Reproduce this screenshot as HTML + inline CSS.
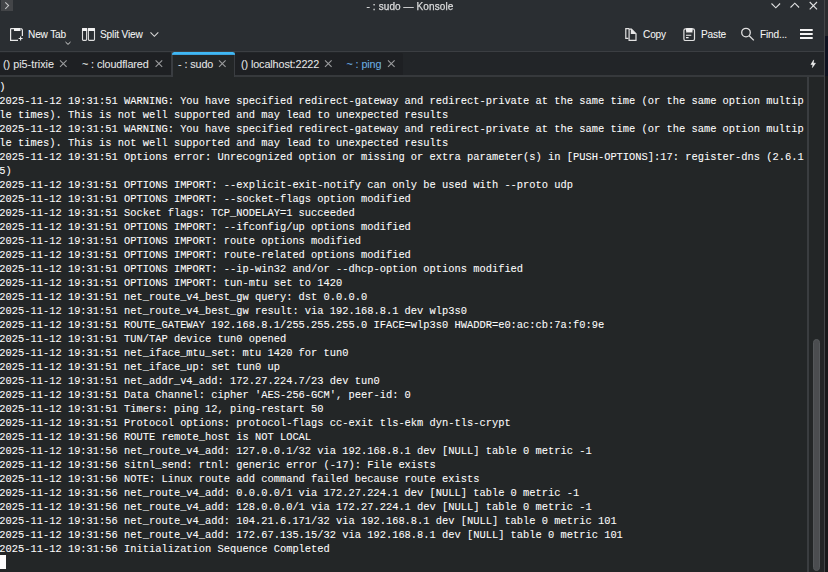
<!DOCTYPE html>
<html><head><meta charset="utf-8">
<style>
*{margin:0;padding:0;box-sizing:border-box}
html,body{width:828px;height:572px;overflow:hidden;background:#1b1d20}
body{position:relative;font-family:"Liberation Sans",sans-serif}
.abs{position:absolute}
#header{left:0;top:0;width:825px;height:51px;background:#2a2e32}
#title{left:-4px;top:-0.5px;width:828px;text-align:center;color:#d9dadb;font-size:10px;line-height:14px;white-space:pre;letter-spacing:0.1px;-webkit-text-stroke:0.25px #dcdddd;will-change:transform}
.tb{color:#f4f5f5;font-size:10.1px;line-height:12px;white-space:pre;letter-spacing:-0.15px;-webkit-text-stroke:0.05px #fcfcfc}
#sep{left:0;top:51px;width:825px;height:1px;background:#3b3e42}
#tabbar{left:0;top:52px;width:825px;height:25px;background:#222528}
#tabs{left:0;top:53px;width:403px;height:22px;background:#1e2023;border-top-right-radius:2px}
#tabline{left:0;top:75px;width:825px;height:2px;background:#36393c}
.tab{color:#e6e7e8;font-size:10.8px;line-height:14px;white-space:pre;letter-spacing:-0.1px;-webkit-text-stroke:0.05px currentColor}
.x{color:#9a9c9e}
#active{left:171px;top:52px;width:64px;height:25px;background:#232627;border-left:2px solid #3a3d41;border-right:1.5px solid #3a3d41}
#blue{left:172px;top:52px;width:63px;height:3px;background:linear-gradient(#3fb8f4,#3fb8f4 66%,#3a8fc4);border-radius:2.5px 2.5px 0 0}
#term{left:0;top:77px;width:825px;height:495px;background:#232627}
#lines{left:-0.7px;top:79.5px;font-family:"Liberation Mono",monospace;font-size:10.4px;line-height:14px;color:#fcfcfc;white-space:pre;-webkit-text-stroke:0.08px #fcfcfc}
#cursor{left:0;top:555px;width:6px;height:14px;background:#fcfcfc}
#vdiv{left:807px;top:77px;width:2px;height:495px;background:#3a3d40}
#rline{left:824px;top:0;width:1px;height:572px;background:#434548}
#rs1{left:825px;top:0;width:3px;height:36px;background:#2a2c2f}
#rs2{left:825px;top:36px;width:3px;height:40px;background:#0e1220}
#rs3{left:825px;top:76px;width:3px;height:496px;background:#18191b}
#handle{left:813px;top:339px;width:7px;height:232px;background:#4b4d50;border:1px solid #55585b;border-radius:4px}
</style></head><body>
<div class="abs" id="header"></div>
<div class="abs" id="title">- : sudo — Konsole</div>

<div class="abs" id="sep"></div>
<div class="abs" id="tabbar"></div>
<div class="abs" id="tabs"></div>
<div class="abs" id="tabline"></div>
<div class="abs" id="term"></div>
<div class="abs" id="active"></div>
<div class="abs" id="blue"></div>

<div class="abs tab" style="left:3px;top:57px;letter-spacing:0px">() pi5-trixie</div>
<div class="abs tab" style="left:82px;top:57px">~ : cloudflared</div>
<div class="abs tab" style="left:178px;top:57px">- : sudo</div>
<div class="abs tab" style="left:241px;top:57px">() localhost:2222</div>
<div class="abs tab" style="left:346.5px;top:57px;color:#6db0e4">~ : ping</div>

<div class="abs tb" style="left:28px;top:29px">New Tab</div>
<div class="abs tb" style="left:100px;top:29px">Split View</div>
<div class="abs tb" style="left:643px;top:29px">Copy</div>
<div class="abs tb" style="left:701px;top:29px">Paste</div>
<div class="abs tb" style="left:760px;top:29px">Find...</div>

<pre class="abs" id="lines">)
2025-11-12 19:31:51 WARNING: You have specified redirect-gateway and redirect-private at the same time (or the same option multip
le times). This is not well supported and may lead to unexpected results
2025-11-12 19:31:51 WARNING: You have specified redirect-gateway and redirect-private at the same time (or the same option multip
le times). This is not well supported and may lead to unexpected results
2025-11-12 19:31:51 Options error: Unrecognized option or missing or extra parameter(s) in [PUSH-OPTIONS]:17: register-dns (2.6.1
5)
2025-11-12 19:31:51 OPTIONS IMPORT: --explicit-exit-notify can only be used with --proto udp
2025-11-12 19:31:51 OPTIONS IMPORT: --socket-flags option modified
2025-11-12 19:31:51 Socket flags: TCP_NODELAY=1 succeeded
2025-11-12 19:31:51 OPTIONS IMPORT: --ifconfig/up options modified
2025-11-12 19:31:51 OPTIONS IMPORT: route options modified
2025-11-12 19:31:51 OPTIONS IMPORT: route-related options modified
2025-11-12 19:31:51 OPTIONS IMPORT: --ip-win32 and/or --dhcp-option options modified
2025-11-12 19:31:51 OPTIONS IMPORT: tun-mtu set to 1420
2025-11-12 19:31:51 net_route_v4_best_gw query: dst 0.0.0.0
2025-11-12 19:31:51 net_route_v4_best_gw result: via 192.168.8.1 dev wlp3s0
2025-11-12 19:31:51 ROUTE_GATEWAY 192.168.8.1/255.255.255.0 IFACE=wlp3s0 HWADDR=e0:ac:cb:7a:f0:9e
2025-11-12 19:31:51 TUN/TAP device tun0 opened
2025-11-12 19:31:51 net_iface_mtu_set: mtu 1420 for tun0
2025-11-12 19:31:51 net_iface_up: set tun0 up
2025-11-12 19:31:51 net_addr_v4_add: 172.27.224.7/23 dev tun0
2025-11-12 19:31:51 Data Channel: cipher 'AES-256-GCM', peer-id: 0
2025-11-12 19:31:51 Timers: ping 12, ping-restart 50
2025-11-12 19:31:51 Protocol options: protocol-flags cc-exit tls-ekm dyn-tls-crypt
2025-11-12 19:31:56 ROUTE remote_host is NOT LOCAL
2025-11-12 19:31:56 net_route_v4_add: 127.0.0.1/32 via 192.168.8.1 dev [NULL] table 0 metric -1
2025-11-12 19:31:56 sitnl_send: rtnl: generic error (-17): File exists
2025-11-12 19:31:56 NOTE: Linux route add command failed because route exists
2025-11-12 19:31:56 net_route_v4_add: 0.0.0.0/1 via 172.27.224.1 dev [NULL] table 0 metric -1
2025-11-12 19:31:56 net_route_v4_add: 128.0.0.0/1 via 172.27.224.1 dev [NULL] table 0 metric -1
2025-11-12 19:31:56 net_route_v4_add: 104.21.6.171/32 via 192.168.8.1 dev [NULL] table 0 metric 101
2025-11-12 19:31:56 net_route_v4_add: 172.67.135.15/32 via 192.168.8.1 dev [NULL] table 0 metric 101
2025-11-12 19:31:56 Initialization Sequence Completed</pre>
<div class="abs" id="cursor"></div>
<div class="abs" id="vdiv"></div>
<div class="abs" id="handle"></div>
<div class="abs" id="rline"></div><div class="abs" id="rs1"></div><div class="abs" id="rs2"></div><div class="abs" id="rs3"></div>
<svg class="abs" style="left:0;top:0" width="828" height="572" viewBox="0 0 828 572" fill="none">
<!-- top-left icon -->
<rect x="1" y="0" width="12" height="11" fill="#434548"/>
<path d="M5.3 2.3 L8.6 5.6 L5.3 8.9" stroke="#c4c5c6" stroke-width="1.05"/>
<!-- window buttons -->
<path d="M771.5 3.5 L775.8 7.8 L780.1 3.5" stroke="#e0e1e2" stroke-width="1.1"/>
<path d="M790.5 7.5 L794.8 3.2 L799.1 7.5" stroke="#e0e1e2" stroke-width="1.1"/>
<path d="M809.7 2 L817 9.3 M817 2 L809.7 9.3" stroke="#e0e1e2" stroke-width="1.1"/>
<!-- new tab icon -->
<path d="M10.6 28.6 H14 M10.6 28.6 V40.4 H18" stroke="#e8e8e8" stroke-width="1.2"/>
<rect x="14" y="28" width="6.5" height="3" fill="#f2f2f2"/>
<path d="M20.5 28.6 Q22.4 28.6 22.4 30.5 V36" stroke="#e8e8e8" stroke-width="1.2"/>
<path d="M18.6 38.5 H22.6 M20.6 36.4 V40.6" stroke="#eeeeee" stroke-width="1.1"/>
<path d="M65.5 42 L68 44.4 L70.5 42" stroke="#d8d8d8" stroke-width="1"/>
<!-- split view icon -->
<rect x="82.5" y="28.5" width="4.1" height="11.9" rx="0.9" stroke="#dedede" stroke-width="1.1"/>
<rect x="88.4" y="28.5" width="6.1" height="11.9" rx="0.9" stroke="#dedede" stroke-width="1.1"/>
<rect x="82" y="27.9" width="5.1" height="3.2" rx="0.6" fill="#f2f2f2"/>
<rect x="87.9" y="27.9" width="7.1" height="3.2" rx="0.6" fill="#f2f2f2"/>
<path d="M150.5 32.4 L154.4 36.3 L158.3 32.4" stroke="#d8d8d8" stroke-width="1.1"/>
<!-- copy icon -->
<path d="M628.4 38.4 H625.8 V28.7 H629.2" stroke="#e2e2e2" stroke-width="1.2"/>
<path d="M629.1 29.1 H631.4 L636 33.7 V40.3 H629.1 Z" stroke="#e2e2e2" stroke-width="1.2"/>
<path d="M630.8 28.6 L636.3 34.1 H630.8 Z" fill="#e8e8e8"/>
<!-- paste icon -->
<rect x="683.9" y="28.9" width="10.6" height="11.6" rx="1.6" stroke="#e0e0e0" stroke-width="1.2"/>
<rect x="686" y="28" width="6.6" height="4" rx="0.8" fill="#f0f0f0"/>
<path d="M686 35.3 H691.3 M686 37.6 H688.6" stroke="#f0f0f0" stroke-width="1.1"/>
<path d="M686 32.6 H692.6" stroke="#9a9a9a" stroke-width="0.9"/>
<!-- search icon -->
<circle cx="746" cy="32.6" r="4.3" stroke="#e0e0e0" stroke-width="1.3"/>
<path d="M749.2 35.8 L753.8 40.4" stroke="#e0e0e0" stroke-width="1.3"/>
<!-- hamburger -->
<path d="M800 30.1 H812.7 M800 34.1 H812.7 M800 38 H812.7" stroke="#f4f4f4" stroke-width="2"/>
<!-- tab close X -->
<g stroke="#9b9c9e" stroke-width="1.1">
<path d="M60 60.3 L66.6 66.9 M66.6 60.3 L60 66.9"/>
<path d="M155.6 60.3 L162.2 66.9 M162.2 60.3 L155.6 66.9"/>
<path d="M219 60.3 L225.6 66.9 M225.6 60.3 L219 66.9"/>
<path d="M325 60.3 L331.6 66.9 M331.6 60.3 L325 66.9"/>
<path d="M388 60.3 L394.6 66.9 M394.6 60.3 L388 66.9"/>
</g>
<!-- lightning -->
<path d="M813.7 59.9 L810.9 64.5 H812.9 L812.4 67.6 L815.5 63.2 H813.3 Z" fill="#f6f6f6" stroke="#f6f6f6" stroke-width="0.5" stroke-linejoin="round"/>
</svg>

</body></html>
